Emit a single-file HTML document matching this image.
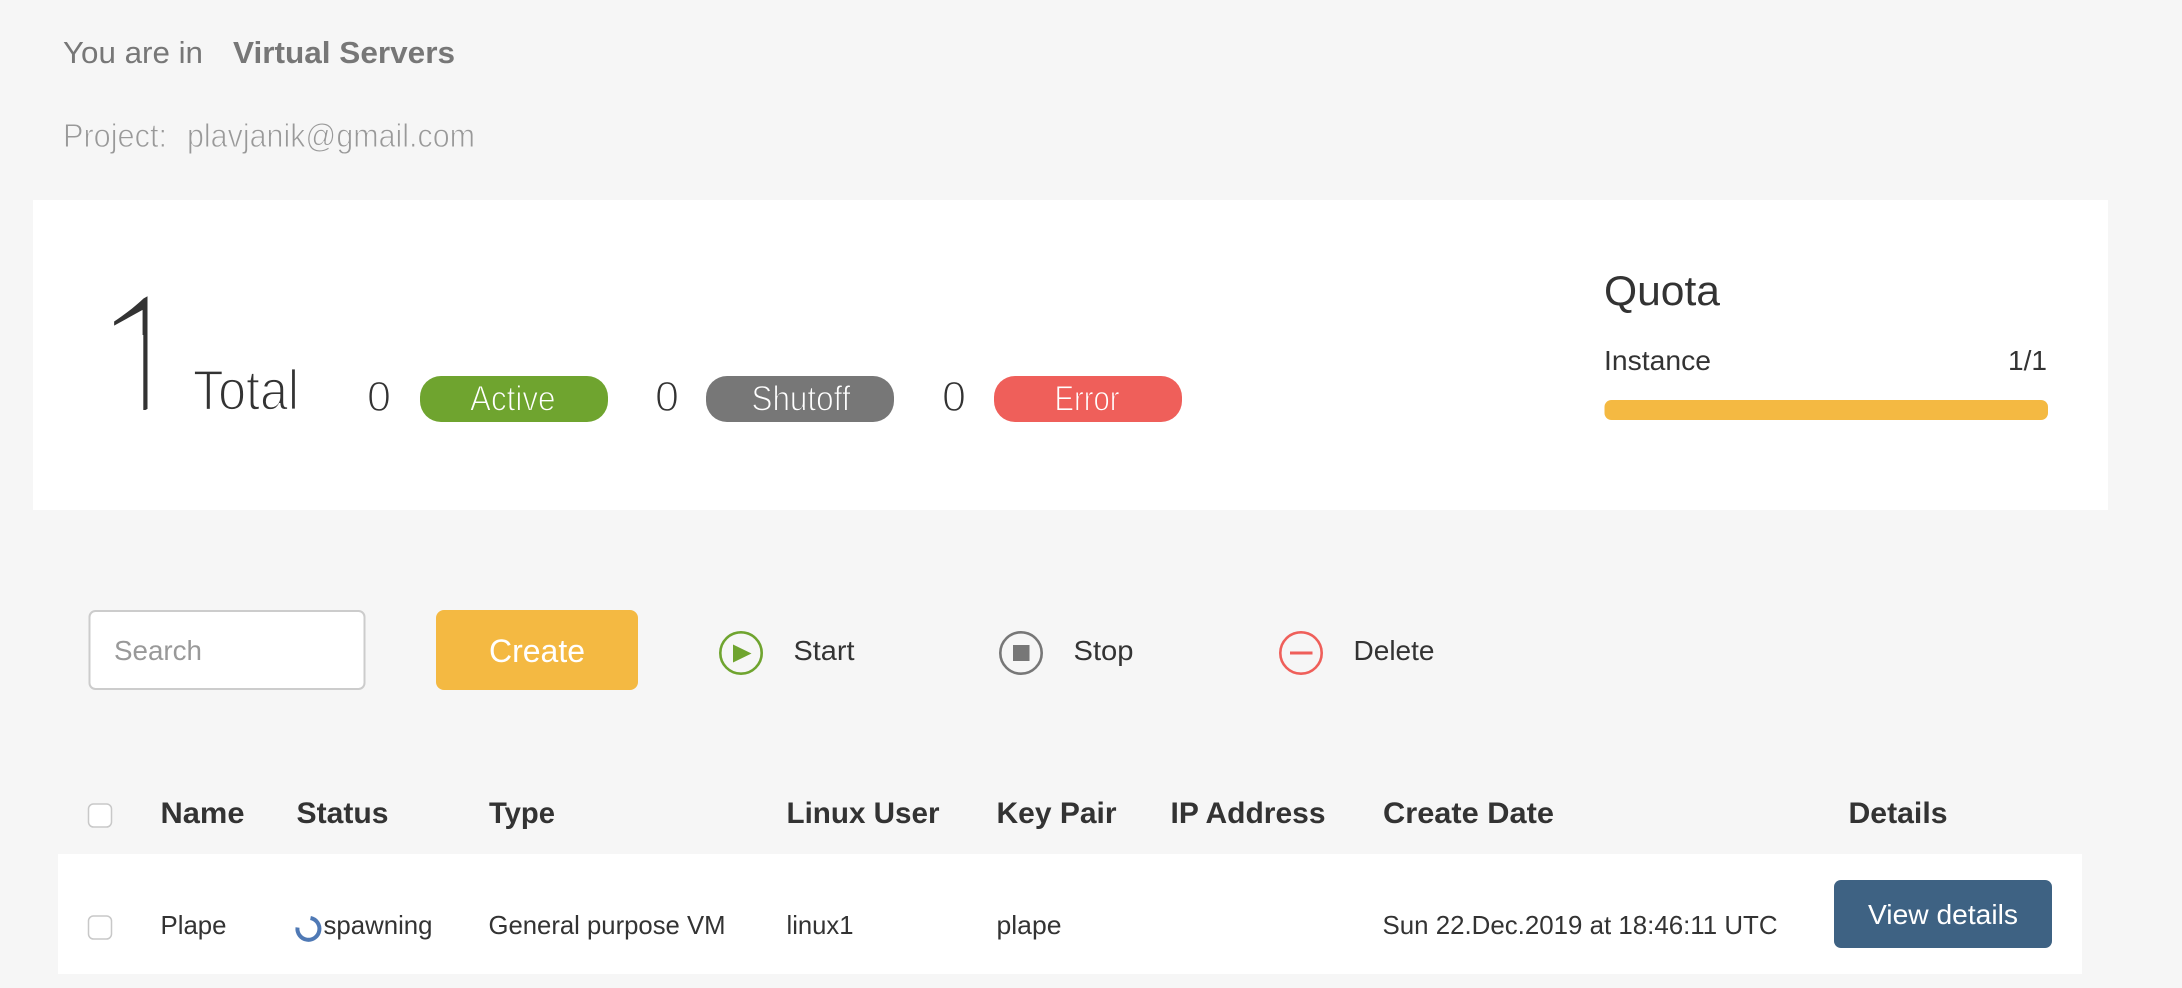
<!DOCTYPE html>
<html lang="en">
<head>
<meta charset="utf-8">
<title>Virtual Servers</title>
<style>
html,body{margin:0;padding:0;background:#f6f6f6;width:2182px;height:988px;overflow:hidden}
svg{display:block;position:absolute;left:0;top:0}
text{font-family:"Liberation Sans",Arial,sans-serif;fill:#333}
.b{font-weight:700}
</style>
</head>
<body>
<svg xmlns="http://www.w3.org/2000/svg" width="2182" height="988" viewBox="0 0 2182 988">
<defs>
<clipPath id="one"><path d="M100 294H147.5V410H143.3V335H100Z"/></clipPath>
</defs>
<rect width="2182" height="988" fill="#f6f6f6"/>

<text x="63" y="63" font-size="31" textLength="140" lengthAdjust="spacingAndGlyphs" style="fill:#777">You are in</text>
<text x="233" y="63" font-size="31" textLength="222" lengthAdjust="spacingAndGlyphs" class="b" style="fill:#777">Virtual Servers</text>
<text x="63" y="147" font-size="33" textLength="104" lengthAdjust="spacingAndGlyphs" style="fill:#999;stroke:#f6f6f6;stroke-width:.9px">Project:</text>
<text x="187" y="147" font-size="33" textLength="288" lengthAdjust="spacingAndGlyphs" style="fill:#999;stroke:#f6f6f6;stroke-width:.9px">plavjanik@gmail.com</text>

<rect x="33" y="200" width="2075" height="310" fill="#fff"/>

<g clip-path="url(#one)"><text x="101.5" y="410" font-size="160" transform="translate(145.5 0) skewY(-29) scale(1.4 1) translate(-145.5 0)" style="font-family:'Noto Sans CJK JP','Liberation Sans',sans-serif;font-weight:100;fill:#333">1</text></g>
<text x="193" y="409.5" font-size="57" textLength="106" lengthAdjust="spacingAndGlyphs" style="stroke:#fff;stroke-width:1.8px">Total</text>

<text x="367" y="411" font-size="43" textLength="24" lengthAdjust="spacingAndGlyphs" style="stroke:#fff;stroke-width:1.4px">0</text>
<rect x="420" y="376" width="188" height="46" rx="21" fill="#6fa42f"/>
<text x="470" y="410.5" font-size="35" textLength="85.5" lengthAdjust="spacingAndGlyphs" style="fill:#fff;stroke:#6fa42f;stroke-width:1.1px">Active</text>

<text x="655" y="411" font-size="43" textLength="24" lengthAdjust="spacingAndGlyphs" style="stroke:#fff;stroke-width:1.4px">0</text>
<rect x="706" y="376" width="188" height="46" rx="21" fill="#777"/>
<text x="751.5" y="410.5" font-size="35" textLength="99" lengthAdjust="spacingAndGlyphs" style="fill:#fff;stroke:#777;stroke-width:1.1px">Shutoff</text>

<text x="942" y="411" font-size="43" textLength="24" lengthAdjust="spacingAndGlyphs" style="stroke:#fff;stroke-width:1.4px">0</text>
<rect x="994" y="376" width="188" height="46" rx="21" fill="#ef5f5a"/>
<text x="1054.5" y="410.5" font-size="35" textLength="65" lengthAdjust="spacingAndGlyphs" style="fill:#fff;stroke:#ef5f5a;stroke-width:1.1px">Error</text>

<text x="1604" y="305" font-size="42" textLength="116" lengthAdjust="spacingAndGlyphs">Quota</text>
<text x="1604" y="370" font-size="28" textLength="107" lengthAdjust="spacingAndGlyphs">Instance</text>
<text x="2008" y="370" font-size="28" textLength="39" lengthAdjust="spacingAndGlyphs">1/1</text>
<rect x="1604.5" y="400" width="443.5" height="20" rx="7" fill="#f4b942"/>

<rect x="89.5" y="611" width="275" height="78" rx="6" fill="#fff" stroke="#ccc" stroke-width="2"/>
<text x="114" y="660" font-size="28" textLength="88" lengthAdjust="spacingAndGlyphs" style="fill:#999">Search</text>
<rect x="436" y="610" width="202" height="80" rx="8" fill="#f4b942"/>
<text x="489" y="662" font-size="32" textLength="96" lengthAdjust="spacingAndGlyphs" style="fill:#fff">Create</text>

<circle cx="741" cy="653" r="20.7" fill="none" stroke="#6fa42f" stroke-width="2.6"/>
<path d="M733 644.5V662.5L751.5 653.5Z" fill="#6fa42f"/>
<text x="793.5" y="660" font-size="28" textLength="61" lengthAdjust="spacingAndGlyphs">Start</text>

<circle cx="1021" cy="653" r="20.7" fill="none" stroke="#777" stroke-width="2.6"/>
<rect x="1013" y="645" width="16.5" height="16" fill="#777"/>
<text x="1073.5" y="660" font-size="28" textLength="60" lengthAdjust="spacingAndGlyphs">Stop</text>

<circle cx="1301" cy="653" r="20.7" fill="none" stroke="#ef5f5a" stroke-width="2.6"/>
<rect x="1290" y="651.5" width="22.5" height="3" fill="#ef5f5a"/>
<text x="1353.5" y="660" font-size="28" textLength="81" lengthAdjust="spacingAndGlyphs">Delete</text>

<rect x="88.5" y="804" width="23" height="23" rx="5" fill="#fff" stroke="#c8c8c8" stroke-width="1.5"/>
<text x="160.5" y="823" font-size="30" textLength="84" lengthAdjust="spacingAndGlyphs" class="b">Name</text>
<text x="296.5" y="823" font-size="30" textLength="92" lengthAdjust="spacingAndGlyphs" class="b">Status</text>
<text x="489" y="823" font-size="30" textLength="66" lengthAdjust="spacingAndGlyphs" class="b">Type</text>
<text x="786.5" y="823" font-size="30" textLength="153" lengthAdjust="spacingAndGlyphs" class="b">Linux User</text>
<text x="996.5" y="823" font-size="30" textLength="120" lengthAdjust="spacingAndGlyphs" class="b">Key Pair</text>
<text x="1170.5" y="823" font-size="30" textLength="155" lengthAdjust="spacingAndGlyphs" class="b">IP Address</text>
<text x="1383" y="823" font-size="30" textLength="171" lengthAdjust="spacingAndGlyphs" class="b">Create Date</text>
<text x="1848.5" y="823" font-size="30" textLength="99" lengthAdjust="spacingAndGlyphs" class="b">Details</text>

<rect x="58" y="854" width="2024" height="120" fill="#fff"/>
<rect x="88.5" y="916" width="23" height="23" rx="5" fill="#fff" stroke="#c8c8c8" stroke-width="1.5"/>
<text x="160.5" y="934" font-size="26" textLength="66" lengthAdjust="spacingAndGlyphs">Plape</text>
<path d="M297.5 927.5A11 11 0 1 0 310.5 918" fill="none" stroke="#4f79b5" stroke-width="4"/>
<text x="323.5" y="934" font-size="26" textLength="109" lengthAdjust="spacingAndGlyphs">spawning</text>
<text x="488.5" y="934" font-size="26" textLength="237" lengthAdjust="spacingAndGlyphs">General purpose VM</text>
<text x="786.5" y="934" font-size="26" textLength="67" lengthAdjust="spacingAndGlyphs">linux1</text>
<text x="996.5" y="934" font-size="26" textLength="65" lengthAdjust="spacingAndGlyphs">plape</text>
<text x="1382.5" y="934" font-size="26" textLength="395" lengthAdjust="spacingAndGlyphs">Sun 22.Dec.2019 at 18:46:11 UTC</text>

<rect x="1834" y="880" width="218" height="68" rx="7" fill="#3e6283"/>
<text x="1868" y="924" font-size="28" textLength="150" lengthAdjust="spacingAndGlyphs" style="fill:#fff">View details</text>
</svg>
</body>
</html>
